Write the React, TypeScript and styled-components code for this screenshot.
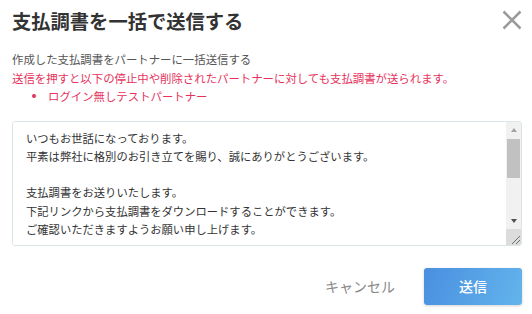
import React from "react";
import styled, { createGlobalStyle } from "styled-components";

const GlobalStyle = createGlobalStyle`
    html, body {
        margin: 0;
        padding: 0;
        background: #ffffff;
    }
    body {
        font-family: "Noto Sans CJK JP", "Noto Sans", sans-serif;
        color: #333333;
    }
`;

const Modal = styled.div`
    width: 532px;
    height: 314px;
    box-sizing: border-box;
    padding: 0 10px 0 12px;
    background: #ffffff;
`;

const Header = styled.div`
    display: flex;
    align-items: center;
    justify-content: space-between;
    height: 44px;
`;

const Title = styled.h2`
    margin: 0;
    font-size: 19.3px;
    font-weight: 700;
    color: #333333;
    line-height: 1;
`;

const CloseButton = styled.button`
    width: 20px;
    height: 20px;
    padding: 0;
    margin-bottom: 4px;
    border: none;
    background: transparent;
    cursor: pointer;
    display: flex;
`;

const Description = styled.div`
    margin-top: 6px;
    font-size: 11.4px;
    line-height: 18.5px;
`;

const Lead = styled.p`
    margin: 0;
    color: #555555;
`;

const Warning = styled.p`
    margin: 0;
    color: #e6325c;
`;

const PartnerList = styled.ul`
    margin: 0;
    padding: 0 0 0 20px;
    list-style: none;
`;

const PartnerItem = styled.li`
    display: flex;
    align-items: center;
    gap: 12px;
    color: #e6325c;

    &::before {
        content: "";
        width: 4px;
        height: 4px;
        border-radius: 50%;
        background: #e6325c;
    }
`;

const Field = styled.div`
    display: flex;
    box-sizing: border-box;
    height: 125px;
    margin-top: 15px;
    border: 1px solid #dbe4e6;
    border-radius: 3px;
    overflow: hidden;
`;

const Message = styled.textarea`
    flex: 1;
    min-width: 0;
    box-sizing: border-box;
    margin: 0;
    padding: 7px 0 5px 13px;
    border: none;
    font-family: "Noto Sans CJK JP", "Noto Sans", sans-serif;
    font-size: 11.3px;
    line-height: 18.3px;
    color: #333333;
    overflow: hidden;
    resize: none;
    outline: none;
`;

const ScrollRail = styled.div`
    display: flex;
    flex-direction: column;
    width: 15px;
    background: #f1f1f1;
`;

const ArrowButton = styled.div<{ dir: "up" | "down" }>`
    display: flex;
    align-items: center;
    justify-content: center;
    height: 16px;
    flex-shrink: 0;

    &::after {
        content: "";
        border-left: 3.5px solid transparent;
        border-right: 3.5px solid transparent;
        ${(props) =>
            props.dir === "up"
                ? "border-bottom: 4px solid #a3a3a3;"
                : "border-top: 4px solid #505050;"}
    }
`;

const Thumb = styled.div`
    height: 39px;
    margin: 1px 1px 0;
    flex-shrink: 0;
    background: #c1c1c1;
`;

const RailSpace = styled.div`
    flex: 1;
`;

const Resizer = styled.div`
    display: flex;
    height: 16px;
    flex-shrink: 0;
    background: #dcdcdc;
`;

const Footer = styled.div`
    display: flex;
    justify-content: flex-end;
    align-items: center;
    margin-top: 22px;
`;

const CancelButton = styled.button`
    height: 37px;
    padding: 0 29px;
    border: none;
    background: transparent;
    font-family: "Noto Sans CJK JP", sans-serif;
    font-size: 14px;
    color: #888888;
    cursor: pointer;
`;

const SendButton = styled.button`
    width: 98px;
    height: 37px;
    border: none;
    border-radius: 3px;
    background: linear-gradient(110deg, #4a8fe0 0%, #63b4ec 100%);
    box-shadow: 0 1px 3px rgba(0, 0, 0, 0.18);
    font-family: "Noto Sans CJK JP", sans-serif;
    font-size: 14px;
    font-weight: 500;
    color: #ffffff;
    cursor: pointer;
`;

const message = [
    "いつもお世話になっております。",
    "平素は弊社に格別のお引き立てを賜り、誠にありがとうございます。",
    "",
    "支払調書をお送りいたします。",
    "下記リンクから支払調書をダウンロードすることができます。",
    "ご確認いただきますようお願い申し上げます。",
    "",
    "【ダウンロードURL】",
    "{{download_url}}",
    "",
    "ご不明な点がございましたら、お気軽にお問い合わせください。",
    "今後ともよろしくお願い申し上げます。",
].join("\n");

function App() {
    return (
        <>
            <GlobalStyle />
            <Modal>
                <Header>
                    <Title>支払調書を一括で送信する</Title>
                    <CloseButton aria-label="閉じる">
                        <svg width="20" height="20" viewBox="0 0 20 20">
                            <path d="M1.5 1.5 L18.5 18.5 M18.5 1.5 L1.5 18.5" stroke="#9b9b9b" strokeWidth="2.6" />
                        </svg>
                    </CloseButton>
                </Header>
                <Description>
                    <Lead>作成した支払調書をパートナーに一括送信する</Lead>
                    <Warning>送信を押すと以下の停止中や削除されたパートナーに対しても支払調書が送られます。</Warning>
                    <PartnerList>
                        <PartnerItem>ログイン無しテストパートナー</PartnerItem>
                    </PartnerList>
                </Description>
                <Field>
                    <Message defaultValue={message} />
                    <ScrollRail>
                        <ArrowButton dir="up" />
                        <Thumb />
                        <RailSpace />
                        <ArrowButton dir="down" />
                        <Resizer>
                            <svg width="15" height="16" viewBox="0 0 15 16">
                                <path d="M14 7 L6 15 M14 11 L10 15" stroke="#6e6e6e" strokeWidth="1" />
                            </svg>
                        </Resizer>
                    </ScrollRail>
                </Field>
                <Footer>
                    <CancelButton>キャンセル</CancelButton>
                    <SendButton>送信</SendButton>
                </Footer>
            </Modal>
        </>
    );
}

export default App;
